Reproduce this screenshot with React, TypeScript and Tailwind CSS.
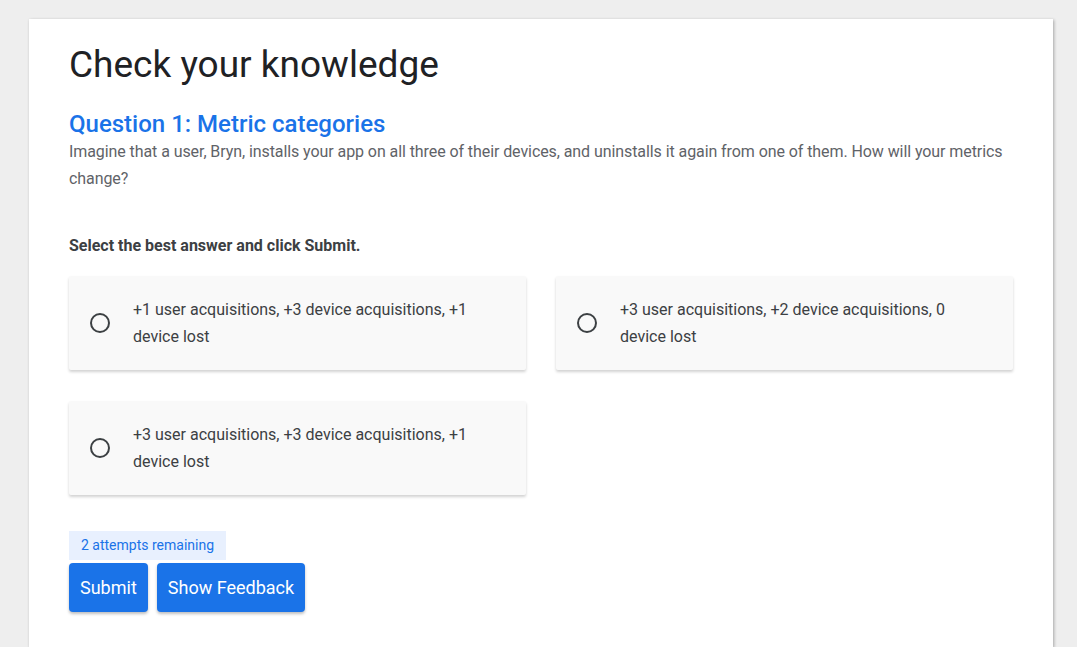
import React from 'react';

const answers = [
  '+1 user acquisitions, +3 device acquisitions, +1 device lost',
  '+3 user acquisitions, +2 device acquisitions, 0 device lost',
  '+3 user acquisitions, +3 device acquisitions, +1 device lost',
];

const Answer = ({ text }: { text: string }) => {
  return (
    <label className="flex items-center h-[94px] bg-[#f9f9f9] rounded-[2px] shadow-[0_2px_3px_rgba(0,0,0,0.18)] pl-[21px] pr-10 cursor-pointer">
      <span className="shrink-0 w-[20px] h-[20px] rounded-full border-2 border-[#3c4043]" />
      <span className="ml-[23px] text-[16px] leading-[27px] text-[#3c4043]">{text}</span>
    </label>
  );
};

const App = () => {
  return (
    <div className="min-h-[647px] bg-[#eeeeee] pt-[19px] font-['Roboto',sans-serif]">
      <div className="ml-[29px] w-[1024px] min-h-[628px] bg-white shadow-[1px_1px_3px_rgba(0,0,0,0.3)] px-10 pt-[24px]">
        <h1 className="text-[37px] leading-[43px] text-[#202124]">
          Check your knowledge
        </h1>

        <h2 className="mt-[22px] text-[24px] leading-8 font-medium text-[#1a73e8]">
          Question 1: Metric categories
        </h2>
        <p className="-mt-[2px] text-[16px] leading-[27px] tracking-[-0.08px] text-[#5f6368]">
          Imagine that a user, Bryn, installs your app on all three of their devices, and uninstalls it again from one of them. How will your metrics change?
        </p>

        <p className="mt-[42px] text-[16px] leading-6 font-bold text-[#3c4043]">
          Select the best answer and click Submit.
        </p>

        <div className="mt-[18px] grid grid-cols-2 gap-x-[30px] gap-y-[31px]">
          {answers.map((a) => (
            <Answer key={a} text={a} />
          ))}
        </div>

        <div className="mt-[36px] inline-block bg-[#e8f0fe] px-3 h-[29px] leading-[29px] text-[14px] text-[#1a73e8]">
          2 attempts remaining
        </div>
        <div className="mt-[3px] flex gap-[9px]">
          <button className="h-[49px] px-[11px] rounded-[4px] bg-[#1a73e8] text-white text-[18px] shadow-[0_2px_3px_rgba(0,0,0,0.25)]">
            Submit
          </button>
          <button className="h-[49px] px-[11px] rounded-[4px] bg-[#1a73e8] text-white text-[18px] shadow-[0_2px_3px_rgba(0,0,0,0.25)]">
            Show Feedback
          </button>
        </div>
      </div>
    </div>
  );
};

export default App;
